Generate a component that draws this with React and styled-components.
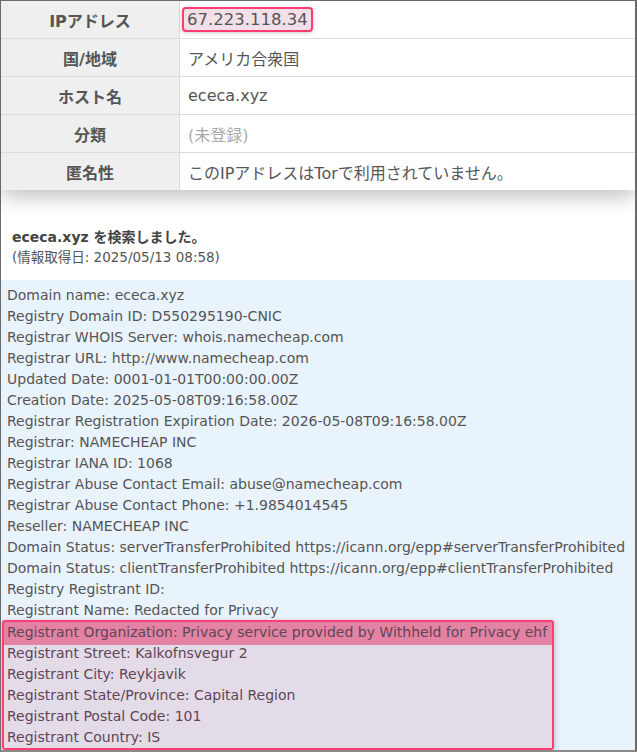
import React from "react";
import styled, { createGlobalStyle } from "styled-components";

const GlobalStyle = createGlobalStyle`
  html, body {
    margin: 0;
    padding: 0;
    background: #fff;
  }
  body {
    font-family: "DejaVu Sans", "Noto Sans CJK JP", sans-serif;
    color: #555;
  }
`;

const Frame = styled.div`
  box-sizing: border-box;
  width: 637px;
  height: 752px;
  overflow: hidden;
  border-top: 1px solid #6a6a6a;
  border-left: 1px solid #6a6a6a;
  border-right: 2px solid #6a6a6a;
  border-bottom: 2px solid #8a8a8a;
  background: #fff;
`;

const InfoTable = styled.div`
  display: grid;
  grid-template-columns: 179px 1fr;
  background: #fff;
  box-shadow: 0 6px 20px rgba(0, 0, 0, 0.26);
  position: relative;
`;

const Label = styled.div`
  height: 37px;
  display: flex;
  align-items: center;
  justify-content: center;
  background: #efefef;
  font-weight: bold;
  font-size: 16px;
  color: #555;
  border-right: 1px solid #dcdcdc;
  border-bottom: ${({ $last }) => ($last ? "none" : "1px solid #dcdcdc")};
`;

const Value = styled.div`
  height: 37px;
  display: flex;
  align-items: center;
  padding-left: 8px;
  font-size: 16px;
  color: ${({ $muted }) => ($muted ? "#aaa" : "#555")};
  border-bottom: ${({ $last }) => ($last ? "none" : "1px solid #dcdcdc")};
`;

const IpMark = styled.span`
  margin-left: -6px;
  padding: 1px 3px;
  font-size: 16.5px;
  border: 2px solid #ff3d71;
  border-radius: 4px;
  background: #f3dfe7;
  box-shadow: 0 1px 4px rgba(0, 0, 0, 0.2);
`;

const Result = styled.div`
  padding: 37px 11px 13px;
`;

const ResultTitle = styled.div`
  font-size: 14px;
  font-weight: bold;
  color: #444;
  line-height: 20px;
`;

const ResultDate = styled.div`
  font-size: 13.5px;
  color: #555;
  line-height: 20px;
`;

const Whois = styled.div`
  background: #e9f3fc;
  padding: 5px 0 0 6px;
  font-size: 14px;
  line-height: 21px;
  color: #555;
  white-space: nowrap;
`;

const Line = styled.div``;

const Highlight = styled.div`
  width: 545px;
  margin: -1px 0 0 -5px;
  padding-left: 3px;
  border: 2px solid #ff3d71;
  border-radius: 3px;
  background: linear-gradient(#e382a3 0 23px, #e4dbe8 23px);
  box-shadow: 0 2px 6px rgba(0, 0, 0, 0.25);
  color: #5e4656;
`;

const rows = [
  { label: "IPアドレス", value: <IpMark>67.223.118.34</IpMark> },
  { label: "国/地域", value: "アメリカ合衆国" },
  { label: "ホスト名", value: "ececa.xyz" },
  { label: "分類", value: "(未登録)", muted: true },
  { label: "匿名性", value: "このIPアドレスはTorで利用されていません。" },
];

const lines = [
  "Domain name: ececa.xyz",
  "Registry Domain ID: D550295190-CNIC",
  "Registrar WHOIS Server: whois.namecheap.com",
  "Registrar URL: http://www.namecheap.com",
  "Updated Date: 0001-01-01T00:00:00.00Z",
  "Creation Date: 2025-05-08T09:16:58.00Z",
  "Registrar Registration Expiration Date: 2026-05-08T09:16:58.00Z",
  "Registrar: NAMECHEAP INC",
  "Registrar IANA ID: 1068",
  "Registrar Abuse Contact Email: abuse@namecheap.com",
  "Registrar Abuse Contact Phone: +1.9854014545",
  "Reseller: NAMECHEAP INC",
  "Domain Status: serverTransferProhibited https://icann.org/epp#serverTransferProhibited",
  "Domain Status: clientTransferProhibited https://icann.org/epp#clientTransferProhibited",
  "Registry Registrant ID:",
  "Registrant Name: Redacted for Privacy",
];

const marked = [
  "Registrant Organization: Privacy service provided by Withheld for Privacy ehf",
  "Registrant Street: Kalkofnsvegur 2",
  "Registrant City: Reykjavik",
  "Registrant State/Province: Capital Region",
  "Registrant Postal Code: 101",
  "Registrant Country: IS",
];

export default function App() {
  return (
    <>
      <GlobalStyle />
      <Frame>
        <InfoTable>
          {rows.map((r, i) => (
            <React.Fragment key={r.label}>
              <Label $last={i === rows.length - 1}>{r.label}</Label>
              <Value $last={i === rows.length - 1} $muted={r.muted}>
                {r.value}
              </Value>
            </React.Fragment>
          ))}
        </InfoTable>
        <Result>
          <ResultTitle>ececa.xyz を検索しました。</ResultTitle>
          <ResultDate>(情報取得日: 2025/05/13 08:58)</ResultDate>
        </Result>
        <Whois>
          {lines.map((l) => (
            <Line key={l}>{l}</Line>
          ))}
          <Highlight>
            {marked.map((l) => (
              <Line key={l}>{l}</Line>
            ))}
          </Highlight>
        </Whois>
      </Frame>
    </>
  );
}
